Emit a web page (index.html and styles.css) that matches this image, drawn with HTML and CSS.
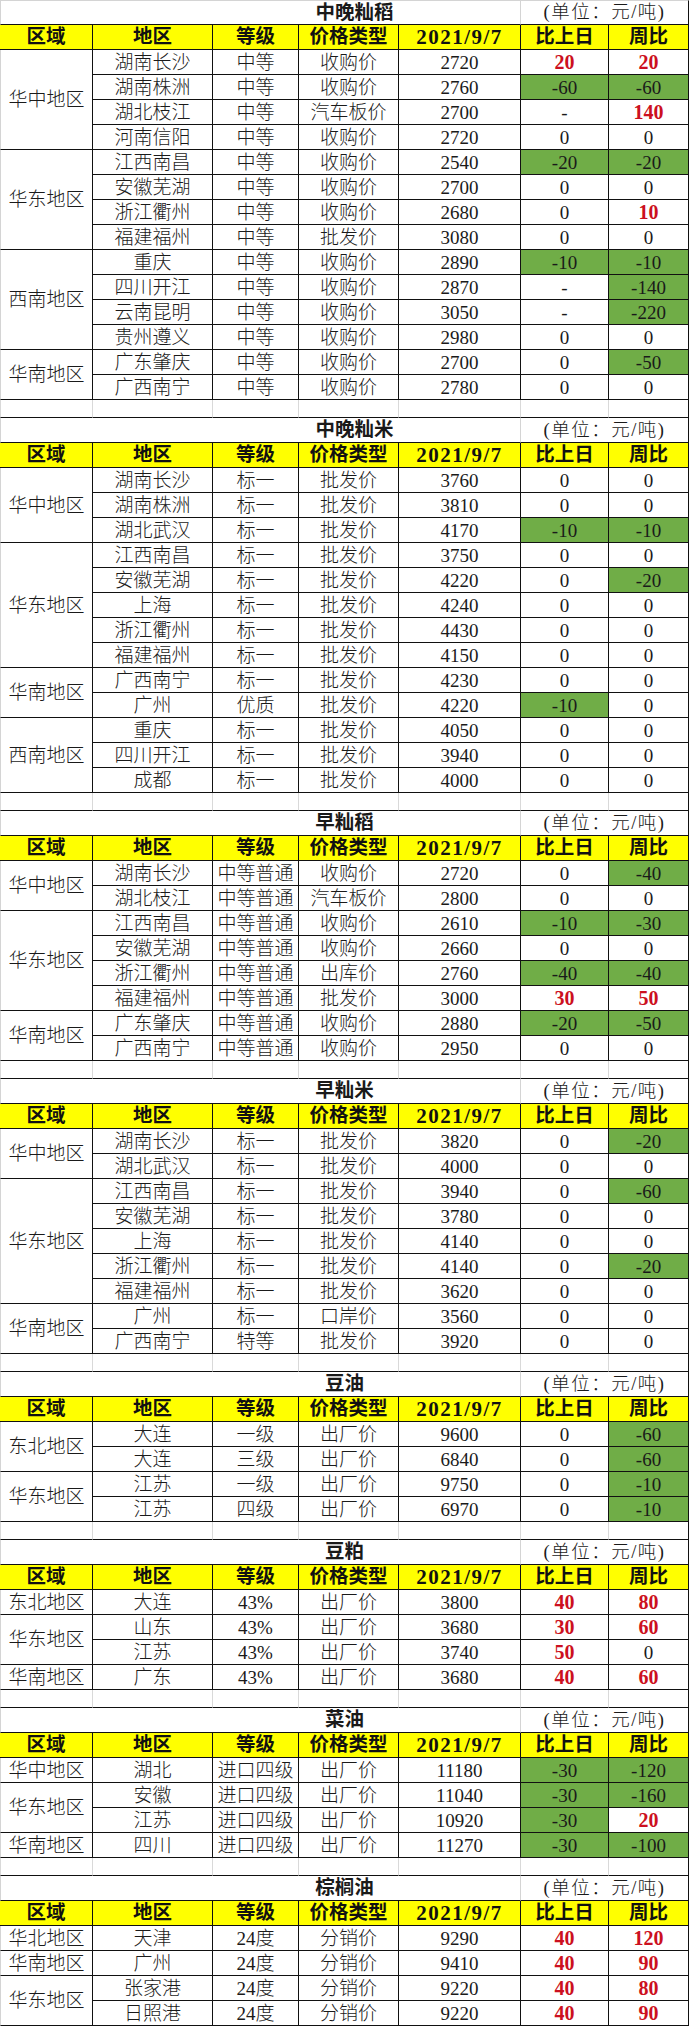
FILE: index.html
```html
<!DOCTYPE html>
<html lang="zh-CN">
<head>
<meta charset="utf-8">
<title>价格表</title>
<link rel="stylesheet" href="styles.css">
</head>
<body>
<div class="sheet">

<div class="block">
<div class="tbl">
<div class="title wide">中晚籼稻</div><div class="unit">(单位：元/吨)</div>
<div class="hd">区域</div><div class="hd">地区</div><div class="hd">等级</div><div class="hd">价格类型</div><div class="hd dt">2021/9/7</div><div class="hd">比上日</div><div class="hd">周比</div>
<div class="c rg s4">华中地区</div>
<div class="c">湖南长沙</div><div class="c">中等</div><div class="c">收购价</div><div class="c">2720</div><div class="c r">20</div><div class="c r">20</div>
<div class="c">湖南株洲</div><div class="c">中等</div><div class="c">收购价</div><div class="c">2760</div><div class="c g">-60</div><div class="c g">-60</div>
<div class="c">湖北枝江</div><div class="c">中等</div><div class="c">汽车板价</div><div class="c">2700</div><div class="c">-</div><div class="c r">140</div>
<div class="c">河南信阳</div><div class="c">中等</div><div class="c">收购价</div><div class="c">2720</div><div class="c">0</div><div class="c">0</div>
<div class="c rg s4">华东地区</div>
<div class="c">江西南昌</div><div class="c">中等</div><div class="c">收购价</div><div class="c">2540</div><div class="c g">-20</div><div class="c g">-20</div>
<div class="c">安徽芜湖</div><div class="c">中等</div><div class="c">收购价</div><div class="c">2700</div><div class="c">0</div><div class="c">0</div>
<div class="c">浙江衢州</div><div class="c">中等</div><div class="c">收购价</div><div class="c">2680</div><div class="c">0</div><div class="c r">10</div>
<div class="c">福建福州</div><div class="c">中等</div><div class="c">批发价</div><div class="c">3080</div><div class="c">0</div><div class="c">0</div>
<div class="c rg s4">西南地区</div>
<div class="c">重庆</div><div class="c">中等</div><div class="c">收购价</div><div class="c">2890</div><div class="c g">-10</div><div class="c g">-10</div>
<div class="c">四川开江</div><div class="c">中等</div><div class="c">收购价</div><div class="c">2870</div><div class="c">-</div><div class="c g">-140</div>
<div class="c">云南昆明</div><div class="c">中等</div><div class="c">收购价</div><div class="c">3050</div><div class="c">-</div><div class="c g">-220</div>
<div class="c">贵州遵义</div><div class="c">中等</div><div class="c">收购价</div><div class="c">2980</div><div class="c">0</div><div class="c">0</div>
<div class="c rg s2">华南地区</div>
<div class="c">广东肇庆</div><div class="c">中等</div><div class="c">收购价</div><div class="c">2700</div><div class="c">0</div><div class="c g">-50</div>
<div class="c">广西南宁</div><div class="c">中等</div><div class="c">收购价</div><div class="c">2780</div><div class="c">0</div><div class="c">0</div>
</div>
<div class="gap"><i></i><i></i><i></i><i></i><i></i><i></i><i></i></div>
</div>

<div class="block">
<div class="tbl">
<div class="title wide">中晚籼米</div><div class="unit">(单位：元/吨)</div>
<div class="hd">区域</div><div class="hd">地区</div><div class="hd">等级</div><div class="hd">价格类型</div><div class="hd dt">2021/9/7</div><div class="hd">比上日</div><div class="hd">周比</div>
<div class="c rg s3">华中地区</div>
<div class="c">湖南长沙</div><div class="c">标一</div><div class="c">批发价</div><div class="c">3760</div><div class="c">0</div><div class="c">0</div>
<div class="c">湖南株洲</div><div class="c">标一</div><div class="c">批发价</div><div class="c">3810</div><div class="c">0</div><div class="c">0</div>
<div class="c">湖北武汉</div><div class="c">标一</div><div class="c">批发价</div><div class="c">4170</div><div class="c g">-10</div><div class="c g">-10</div>
<div class="c rg s5">华东地区</div>
<div class="c">江西南昌</div><div class="c">标一</div><div class="c">批发价</div><div class="c">3750</div><div class="c">0</div><div class="c">0</div>
<div class="c">安徽芜湖</div><div class="c">标一</div><div class="c">批发价</div><div class="c">4220</div><div class="c">0</div><div class="c g">-20</div>
<div class="c">上海</div><div class="c">标一</div><div class="c">批发价</div><div class="c">4240</div><div class="c">0</div><div class="c">0</div>
<div class="c">浙江衢州</div><div class="c">标一</div><div class="c">批发价</div><div class="c">4430</div><div class="c">0</div><div class="c">0</div>
<div class="c">福建福州</div><div class="c">标一</div><div class="c">批发价</div><div class="c">4150</div><div class="c">0</div><div class="c">0</div>
<div class="c rg s2">华南地区</div>
<div class="c">广西南宁</div><div class="c">标一</div><div class="c">批发价</div><div class="c">4230</div><div class="c">0</div><div class="c">0</div>
<div class="c">广州</div><div class="c">优质</div><div class="c">批发价</div><div class="c">4220</div><div class="c g">-10</div><div class="c">0</div>
<div class="c rg s3">西南地区</div>
<div class="c">重庆</div><div class="c">标一</div><div class="c">批发价</div><div class="c">4050</div><div class="c">0</div><div class="c">0</div>
<div class="c">四川开江</div><div class="c">标一</div><div class="c">批发价</div><div class="c">3940</div><div class="c">0</div><div class="c">0</div>
<div class="c">成都</div><div class="c">标一</div><div class="c">批发价</div><div class="c">4000</div><div class="c">0</div><div class="c">0</div>
</div>
<div class="gap"><i></i><i></i><i></i><i></i><i></i><i></i><i></i></div>
</div>

<div class="block">
<div class="tbl">
<div class="title">早籼稻</div><div class="unit">(单位：元/吨)</div>
<div class="hd">区域</div><div class="hd">地区</div><div class="hd">等级</div><div class="hd">价格类型</div><div class="hd dt">2021/9/7</div><div class="hd">比上日</div><div class="hd">周比</div>
<div class="c rg s2">华中地区</div>
<div class="c">湖南长沙</div><div class="c">中等普通</div><div class="c">收购价</div><div class="c">2720</div><div class="c">0</div><div class="c g">-40</div>
<div class="c">湖北枝江</div><div class="c">中等普通</div><div class="c">汽车板价</div><div class="c">2800</div><div class="c">0</div><div class="c">0</div>
<div class="c rg s4">华东地区</div>
<div class="c">江西南昌</div><div class="c">中等普通</div><div class="c">收购价</div><div class="c">2610</div><div class="c g">-10</div><div class="c g">-30</div>
<div class="c">安徽芜湖</div><div class="c">中等普通</div><div class="c">收购价</div><div class="c">2660</div><div class="c">0</div><div class="c">0</div>
<div class="c">浙江衢州</div><div class="c">中等普通</div><div class="c">出库价</div><div class="c">2760</div><div class="c g">-40</div><div class="c g">-40</div>
<div class="c">福建福州</div><div class="c">中等普通</div><div class="c">批发价</div><div class="c">3000</div><div class="c r">30</div><div class="c r">50</div>
<div class="c rg s2">华南地区</div>
<div class="c">广东肇庆</div><div class="c">中等普通</div><div class="c">收购价</div><div class="c">2880</div><div class="c g">-20</div><div class="c g">-50</div>
<div class="c">广西南宁</div><div class="c">中等普通</div><div class="c">收购价</div><div class="c">2950</div><div class="c">0</div><div class="c">0</div>
</div>
<div class="gap"><i></i><i></i><i></i><i></i><i></i><i></i><i></i></div>
</div>

<div class="block">
<div class="tbl">
<div class="title">早籼米</div><div class="unit">(单位：元/吨)</div>
<div class="hd">区域</div><div class="hd">地区</div><div class="hd">等级</div><div class="hd">价格类型</div><div class="hd dt">2021/9/7</div><div class="hd">比上日</div><div class="hd">周比</div>
<div class="c rg s2">华中地区</div>
<div class="c">湖南长沙</div><div class="c">标一</div><div class="c">批发价</div><div class="c">3820</div><div class="c">0</div><div class="c g">-20</div>
<div class="c">湖北武汉</div><div class="c">标一</div><div class="c">批发价</div><div class="c">4000</div><div class="c">0</div><div class="c">0</div>
<div class="c rg s5">华东地区</div>
<div class="c">江西南昌</div><div class="c">标一</div><div class="c">批发价</div><div class="c">3940</div><div class="c">0</div><div class="c g">-60</div>
<div class="c">安徽芜湖</div><div class="c">标一</div><div class="c">批发价</div><div class="c">3780</div><div class="c">0</div><div class="c">0</div>
<div class="c">上海</div><div class="c">标一</div><div class="c">批发价</div><div class="c">4140</div><div class="c">0</div><div class="c">0</div>
<div class="c">浙江衢州</div><div class="c">标一</div><div class="c">批发价</div><div class="c">4140</div><div class="c">0</div><div class="c g">-20</div>
<div class="c">福建福州</div><div class="c">标一</div><div class="c">批发价</div><div class="c">3620</div><div class="c">0</div><div class="c">0</div>
<div class="c rg s2">华南地区</div>
<div class="c">广州</div><div class="c">标一</div><div class="c">口岸价</div><div class="c">3560</div><div class="c">0</div><div class="c">0</div>
<div class="c">广西南宁</div><div class="c">特等</div><div class="c">批发价</div><div class="c">3920</div><div class="c">0</div><div class="c">0</div>
</div>
<div class="gap"><i></i><i></i><i></i><i></i><i></i><i></i><i></i></div>
</div>

<div class="block">
<div class="tbl">
<div class="title">豆油</div><div class="unit">(单位：元/吨)</div>
<div class="hd">区域</div><div class="hd">地区</div><div class="hd">等级</div><div class="hd">价格类型</div><div class="hd dt">2021/9/7</div><div class="hd">比上日</div><div class="hd">周比</div>
<div class="c rg s2">东北地区</div>
<div class="c">大连</div><div class="c">一级</div><div class="c">出厂价</div><div class="c">9600</div><div class="c">0</div><div class="c g">-60</div>
<div class="c">大连</div><div class="c">三级</div><div class="c">出厂价</div><div class="c">6840</div><div class="c">0</div><div class="c g">-60</div>
<div class="c rg s2">华东地区</div>
<div class="c">江苏</div><div class="c">一级</div><div class="c">出厂价</div><div class="c">9750</div><div class="c">0</div><div class="c g">-10</div>
<div class="c">江苏</div><div class="c">四级</div><div class="c">出厂价</div><div class="c">6970</div><div class="c">0</div><div class="c g">-10</div>
</div>
<div class="gap"><i></i><i></i><i></i><i></i><i></i><i></i><i></i></div>
</div>

<div class="block">
<div class="tbl">
<div class="title">豆粕</div><div class="unit">(单位：元/吨)</div>
<div class="hd">区域</div><div class="hd">地区</div><div class="hd">等级</div><div class="hd">价格类型</div><div class="hd dt">2021/9/7</div><div class="hd">比上日</div><div class="hd">周比</div>
<div class="c rg">东北地区</div>
<div class="c">大连</div><div class="c">43%</div><div class="c">出厂价</div><div class="c">3800</div><div class="c r">40</div><div class="c r">80</div>
<div class="c rg s2">华东地区</div>
<div class="c">山东</div><div class="c">43%</div><div class="c">出厂价</div><div class="c">3680</div><div class="c r">30</div><div class="c r">60</div>
<div class="c">江苏</div><div class="c">43%</div><div class="c">出厂价</div><div class="c">3740</div><div class="c r">50</div><div class="c">0</div>
<div class="c rg">华南地区</div>
<div class="c">广东</div><div class="c">43%</div><div class="c">出厂价</div><div class="c">3680</div><div class="c r">40</div><div class="c r">60</div>
</div>
<div class="gap"><i></i><i></i><i></i><i></i><i></i><i></i><i></i></div>
</div>

<div class="block">
<div class="tbl">
<div class="title">菜油</div><div class="unit">(单位：元/吨)</div>
<div class="hd">区域</div><div class="hd">地区</div><div class="hd">等级</div><div class="hd">价格类型</div><div class="hd dt">2021/9/7</div><div class="hd">比上日</div><div class="hd">周比</div>
<div class="c rg">华中地区</div>
<div class="c">湖北</div><div class="c">进口四级</div><div class="c">出厂价</div><div class="c">11180</div><div class="c g">-30</div><div class="c g">-120</div>
<div class="c rg s2">华东地区</div>
<div class="c">安徽</div><div class="c">进口四级</div><div class="c">出厂价</div><div class="c">11040</div><div class="c g">-30</div><div class="c g">-160</div>
<div class="c">江苏</div><div class="c">进口四级</div><div class="c">出厂价</div><div class="c">10920</div><div class="c g">-30</div><div class="c r">20</div>
<div class="c rg">华南地区</div>
<div class="c">四川</div><div class="c">进口四级</div><div class="c">出厂价</div><div class="c">11270</div><div class="c g">-30</div><div class="c g">-100</div>
</div>
<div class="gap"><i></i><i></i><i></i><i></i><i></i><i></i><i></i></div>
</div>

<div class="block">
<div class="tbl">
<div class="title">棕榈油</div><div class="unit">(单位：元/吨)</div>
<div class="hd">区域</div><div class="hd">地区</div><div class="hd">等级</div><div class="hd">价格类型</div><div class="hd dt">2021/9/7</div><div class="hd">比上日</div><div class="hd">周比</div>
<div class="c rg">华北地区</div>
<div class="c">天津</div><div class="c">24度</div><div class="c">分销价</div><div class="c">9290</div><div class="c r">40</div><div class="c r">120</div>
<div class="c rg">华南地区</div>
<div class="c">广州</div><div class="c">24度</div><div class="c">分销价</div><div class="c">9410</div><div class="c r">40</div><div class="c r">90</div>
<div class="c rg s2">华东地区</div>
<div class="c">张家港</div><div class="c">24度</div><div class="c">分销价</div><div class="c">9220</div><div class="c r">40</div><div class="c r">80</div>
<div class="c">日照港</div><div class="c">24度</div><div class="c">分销价</div><div class="c">9220</div><div class="c r">40</div><div class="c r">90</div>
</div>
</div>

</div>
</body>
</html>
```

FILE: styles.css
```css
html, body {
  margin: 0;
  padding: 0;
  background: #ffffff;
}

.sheet {
  width: 689px;
  font-family: "Liberation Serif", "Noto Sans CJK SC", serif;
  color: #1a1a1a;
}

.tbl,
.gap {
  display: grid;
  grid-template-columns: 93px 120px 86px 100px 122px 88px 80px;
}

.tbl {
  grid-auto-rows: 25px;
}

.gap {
  grid-auto-rows: 18px;
}

.tbl > div,
.gap > i {
  box-sizing: border-box;
  display: flex;
  align-items: center;
  justify-content: center;
  white-space: nowrap;
  line-height: 1;
  border-right: 1px solid #111;
  border-bottom: 1px solid #111;
}

.title {
  grid-column: 1 / 6;
  padding-left: 168px;
  font-weight: 700;
  font-size: 19.5px;
  border-left: 1px solid #d4d4d4;
  border-right-color: #d4d4d4 !important;
}

.title.wide {
  padding-left: 188px;
}

.unit {
  grid-column: 6 / 8;
  font-size: 18.5px;
  font-weight: 300;
  letter-spacing: 1.5px;
}

.block:first-child .title,
.block:first-child .unit {
  border-top: 1px solid #d4d4d4;
}

.hd {
  background: #ffff00;
  font-weight: 700;
  font-size: 19.5px;
  color: #111;
}

.hd.dt {
  font-size: 21px;
  letter-spacing: 1.5px;
}

.hd:first-of-type {
  border-left: 1px solid #d4d4d4;
}

.c {
  font-size: 19px;
  font-weight: 300;
}

.rg {
  grid-column: 1;
  border-left: 1px solid #d4d4d4;
}

.s2 { grid-row: span 2; }
.s3 { grid-row: span 3; }
.s4 { grid-row: span 4; }
.s5 { grid-row: span 5; }

.g {
  background: #70ad47;
}

.r {
  color: #cc1020;
  font-weight: 700;
  font-size: 20px;
}

.gap > i {
  border-right-color: #d9d9d9;
}

.gap > i:first-child {
  border-left: 1px solid #d9d9d9;
}

.gap > i:last-child {
  border-right-color: #111;
}
```
